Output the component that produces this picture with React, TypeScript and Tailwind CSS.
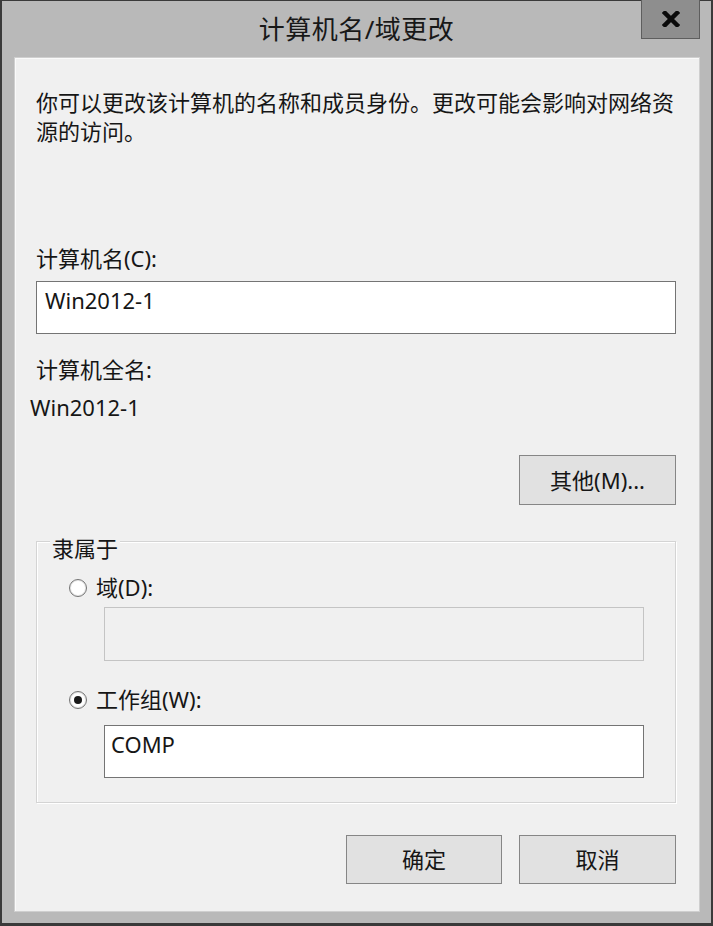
import React from "react";

const font = { fontFamily: '"Noto Sans", "Noto Sans CJK SC", sans-serif' };

function Radio({ checked }: { checked?: boolean }) {
  return (
    <span className="w-[18px] h-[18px] rounded-full border border-[#737373] bg-white shadow-[inset_0_0_0_1px_#e6e6e6] flex items-center justify-center shrink-0">
      {checked && <span className="w-[8px] h-[8px] rounded-full bg-[#1a1a1a]" />}
    </span>
  );
}

export default function App() {
  return (
    <div
      className="w-[713px] h-[926px] bg-[#b9b9b9] border-t border-l-2 border-r-2 border-b-[3px] border-[#3a3a3a] flex flex-col text-[#161616]"
      style={font}
    >
      <div className="h-[56px] relative flex items-center justify-center shrink-0">
        <span className="text-[26px] leading-[30px] text-[#181818] tracking-[0.5px]">计算机名/域更改</span>
        <div className="absolute top-[-1px] right-[11px] w-[59px] h-[39px] bg-[#8e8e8e] border border-[#5e5e5e] border-t-0 flex items-center justify-center">
          <svg width="18" height="16" viewBox="0 0 18 16">
            <path d="M3 2 L15 14 M15 2 L3 14" stroke="#0a0a0a" strokeWidth="4.5" strokeLinecap="square" />
          </svg>
        </div>
      </div>
      <div className="flex-1 ml-[12px] mr-[11px] mb-[11px] bg-[#f0f0f0] border border-[#cfcfcf] shadow-[inset_1px_1px_0_#fafafa] flex flex-col pl-[21px] pr-[23px] pt-[30px] text-[22px] leading-[29px]">
        <p className="whitespace-nowrap">
          <span className="block">你可以更改该计算机的名称和成员身份。更改可能会影响对网络资</span>
          <span className="block">源的访问。</span>
        </p>
        <div className="mt-[98px]">计算机名(C):</div>
        <div className="mt-[8px] h-[53px] bg-white border border-[#747474] pl-[8px] pt-[4px]">Win2012-1</div>
        <div className="mt-[21px]">计算机全名:</div>
        <div className="mt-[9px] -ml-[6px]">Win2012-1</div>
        <div className="mt-[33px] self-end w-[157px] h-[50px] bg-[#e1e1e1] border border-[#868686] flex items-center justify-center">
          其他(M)...
        </div>
        <div className="mt-[36px] relative h-[262px] border border-[#d4d4d4] shadow-[inset_1px_1px_0_#ffffff,1px_1px_0_#ffffff] flex flex-col pt-[31px] pl-[32px] pr-[31px]">
          <span className="absolute top-[-8px] left-[13px] px-[2px] bg-[#f0f0f0]">隶属于</span>
          <div className="flex items-center gap-[9px]">
            <Radio />
            <span>域(D):</span>
          </div>
          <div className="mt-[5px] ml-[35px] h-[54px] border border-[#c4c4c4] bg-[#f0f0f0]" />
          <div className="mt-[24px] flex items-center gap-[9px]">
            <Radio checked />
            <span>工作组(W):</span>
          </div>
          <div className="mt-[11px] ml-[35px] h-[53px] bg-white border border-[#747474] pl-[6px] pt-[4px]">COMP</div>
        </div>
        <div className="mt-[32px] flex justify-end gap-[17px]">
          <div className="w-[156px] h-[49px] bg-[#e1e1e1] border border-[#868686] flex items-center justify-center">确定</div>
          <div className="w-[157px] h-[49px] bg-[#e1e1e1] border border-[#868686] flex items-center justify-center">取消</div>
        </div>
      </div>
    </div>
  );
}
